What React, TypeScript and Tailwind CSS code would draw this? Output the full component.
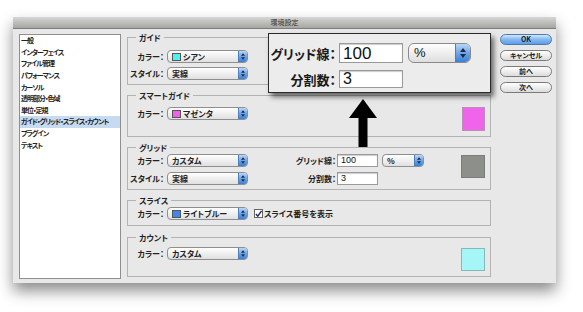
import React from 'react';

const jp = "font-['Noto_Sans_CJK_JP',sans-serif] [font-feature-settings:'palt']";

const listItems = [
    '一般',
    'インターフェイス',
    'ファイル管理',
    'パフォーマンス',
    'カーソル',
    '透明部分・色域',
    '単位・定規',
    'ガイド・グリッド・スライス・カウント',
    'プラグイン',
    'テキスト',
];

const Stepper = ({ big = false }: { big?: boolean }) => (
    <div
        className={`flex flex-col items-center justify-center border-l border-[#4d7fc0] bg-gradient-to-b from-[#b9d7f7] via-[#6ea5e8] to-[#3b7fd6] ${big ? 'w-[15px] rounded-r-[5px] gap-[2px]' : 'w-[9px] rounded-r-[3px] gap-[1px]'}`}
    >
        <svg width={big ? 6 : 4} height={big ? 4 : 3} viewBox="0 0 6 4">
            <polygon points="3,0 6,4 0,4" fill="#1b2a40" />
        </svg>
        <svg width={big ? 6 : 4} height={big ? 4 : 3} viewBox="0 0 6 4">
            <polygon points="0,0 6,0 3,4" fill="#1b2a40" />
        </svg>
    </div>
);

const Popup = ({ w, swatch, label }: { w: string; swatch?: string; label: string }) => (
    <div
        className={`flex h-[13px] items-stretch rounded-[4px] border border-[#8e8e8e] bg-gradient-to-b from-white to-[#e0e0e0] ${w}`}
    >
        <div className="flex flex-1 items-center gap-[2px] pl-[4px] text-[8px] font-bold leading-none text-[#222]">
            {swatch && <span className={`h-[8px] w-[9px] border border-[#555] ${swatch}`} />}
            {label}
        </div>
        <Stepper />
    </div>
);

const Label = ({ children, w = 'w-[36px]' }: { children: React.ReactNode; w?: string }) => (
    <span className={`${w} shrink-0 text-right text-[8px] font-bold leading-none text-[#222]`}>{children}</span>
);

const Group = ({ title, className, children }: { title: string; className: string; children: React.ReactNode }) => (
    <fieldset className={`border border-[#b3b3b3] ${className}`}>
        <legend className="ml-[8px] px-[3px] text-[8px] font-bold leading-[11px] text-[#222]">{title}</legend>
        {children}
    </fieldset>
);

const Btn = ({ children, primary = false }: { children: React.ReactNode; primary?: boolean }) => (
    <div
        className={`flex h-[11px] w-[52px] items-center justify-center rounded-full border text-[7px] font-bold leading-none text-[#222] ${primary ? 'border-[#4f78ad] bg-gradient-to-b from-[#d3e8ff] via-[#84b8f0] to-[#5d9de6]' : 'border-[#7a7a7a] bg-gradient-to-b from-white to-[#dcdcdc]'}`}
    >
        {children}
    </div>
);

const Field = ({ value, w, h, text }: { value: string; w: string; h: string; text: string }) => (
    <div
        className={`flex items-center border border-[#9a9a9a] bg-white pl-[3px] font-['Liberation_Sans',sans-serif] leading-none text-[#111] shadow-[inset_0_1px_1px_rgba(0,0,0,0.2)] ${w} ${h} ${text}`}
    >
        {value}
    </div>
);

export default function App() {
    return (
        <div className={`relative h-[312px] w-[583px] overflow-hidden bg-white pl-[13px] pt-[17px] ${jp}`}>
            <div className="flex h-[266px] w-[543px] flex-col bg-[#e8e8e8] shadow-[0_8px_14px_rgba(0,0,0,0.45)]">
                {/* Title bar */}
                <div className="flex h-[12px] items-center justify-center border-b border-[#7d7d7b] bg-gradient-to-b from-[#d6d6d4] to-[#a6a6a3] text-[7px] leading-none text-[#333]">
                    環境設定
                </div>

                <div className="flex items-start pl-[6px] pt-[3px]">
                    {/* Category list */}
                    <div className="mt-[2px] h-[245px] w-[102px] border border-[#8f8f8f] bg-white">
                        {listItems.map((item, i) => (
                            <div
                                key={item}
                                className={`flex h-[11.6px] items-center whitespace-nowrap pl-[1px] text-[7px] font-bold leading-none tracking-[-1px] text-[#222] ${i === 7 ? 'bg-[#c6daf0]' : ''}`}
                            >
                                {item}
                            </div>
                        ))}
                    </div>

                    {/* Settings groups */}
                    <div className="ml-[6px] flex w-[364px] flex-col">
                        <Group title="ガイド" className="h-[53px]">
                            <div className="flex flex-col gap-[4px] pt-[7px]">
                                <div className="flex items-center gap-[3px]">
                                    <Label>カラー：</Label>
                                    <Popup w="w-[81px]" swatch="bg-[#4ff0f0]" label="シアン" />
                                </div>
                                <div className="flex items-center gap-[3px]">
                                    <Label>スタイル：</Label>
                                    <Popup w="w-[81px]" label="実線" />
                                </div>
                            </div>
                        </Group>

                        <Group title="スマートガイド" className="mt-[5px] h-[47px]">
                            <div className="flex items-start justify-between pr-[5px] pt-[6px]">
                                <div className="flex items-center gap-[3px]">
                                    <Label>カラー：</Label>
                                    <Popup w="w-[81px]" swatch="bg-[#f060ea]" label="マゼンタ" />
                                </div>
                                <div className="h-[24px] w-[23px] border border-[#b98fb5] bg-[#f064ec]" />
                            </div>
                        </Group>

                        <Group title="グリッド" className="mt-[5px] h-[48px]">
                            <div className="flex items-start pr-[5px] pt-[1px]">
                                <div className="flex flex-col gap-[5px]">
                                    <div className="flex items-center gap-[3px]">
                                        <Label>カラー：</Label>
                                        <Popup w="w-[81px]" label="カスタム" />
                                    </div>
                                    <div className="flex items-center gap-[3px]">
                                        <Label>スタイル：</Label>
                                        <Popup w="w-[81px]" label="実線" />
                                    </div>
                                </div>
                                <div className="ml-[43px] flex flex-col gap-[5px]">
                                    <div className="flex items-center gap-[1px]">
                                        <Label w="w-[45px]">グリッド線：</Label>
                                        <Field value="100" w="w-[41px]" h="h-[13px]" text="text-[9px]" />
                                        <div className="ml-[3px]">
                                            <Popup w="w-[42px]" label="%" />
                                        </div>
                                    </div>
                                    <div className="flex items-center gap-[1px]">
                                        <Label w="w-[45px]">分割数：</Label>
                                        <Field value="3" w="w-[41px]" h="h-[13px]" text="text-[9px]" />
                                    </div>
                                </div>
                                <div className="ml-auto mt-[1px] h-[23px] w-[24px] border border-[#7b7d79] bg-[#8d8f8b]" />
                            </div>
                        </Group>

                        <Group title="スライス" className="mt-[5px] h-[31px]">
                            <div className="flex items-center gap-[3px] pt-[1px]">
                                <Label>カラー：</Label>
                                <Popup w="w-[81px]" swatch="bg-[#3f87ea]" label="ライトブルー" />
                                <div className="ml-[3px] flex items-center gap-[1px]">
                                    <span className="flex h-[9px] w-[9px] items-center justify-center border border-[#666] bg-white">
                                        <svg width="8" height="8" viewBox="0 0 8 8">
                                            <path d="M1 4 L3.2 6.5 L7.5 0.5" fill="none" stroke="#1a2a5a" strokeWidth="1.6" />
                                        </svg>
                                    </span>
                                    <span className="text-[8px] font-bold leading-none text-[#222]">スライス番号を表示</span>
                                </div>
                            </div>
                        </Group>

                        <Group title="カウント" className="mt-[6px] h-[45px]">
                            <div className="flex items-start justify-between pr-[5px] pt-[4px]">
                                <div className="flex items-center gap-[3px]">
                                    <Label>カラー：</Label>
                                    <Popup w="w-[81px]" label="カスタム" />
                                </div>
                                <div className="mt-[1px] h-[23px] w-[24px] border border-[#84b9bb] bg-[#a6f5f7]" />
                            </div>
                        </Group>
                    </div>

                    {/* Buttons */}
                    <div className="ml-[9px] mt-[2px] flex flex-col gap-[5px]">
                        <Btn primary>OK</Btn>
                        <Btn>キャンセル</Btn>
                        <Btn>前へ</Btn>
                        <Btn>次へ</Btn>
                    </div>
                </div>
            </div>

            {/* Zoomed callout */}
            <div className="absolute left-[268px] top-[33px] flex h-[60px] w-[223px] flex-col gap-[7px] border border-[#2a2a2a] bg-[#ececec] pt-[9px] shadow-[3px_4px_5px_rgba(0,0,0,0.55)]">
                <div className="flex items-center">
                    <span className="w-[67px] text-right text-[13px] font-bold leading-none text-[#1a1a1a]">グリッド線：</span>
                    <div className="ml-[3px]">
                        <Field value="100" w="w-[64px]" h="h-[20px]" text="text-[17px]" />
                    </div>
                    <div className="ml-[5px] flex h-[20px] w-[63px] items-stretch rounded-[6px] border border-[#8a8a8a] bg-gradient-to-b from-white to-[#dedede]">
                        <span className="flex-1 pl-[5px] pt-[2px] font-['Liberation_Sans',sans-serif] text-[13px] leading-none text-[#111]">%</span>
                        <Stepper big />
                    </div>
                </div>
                <div className="flex items-center">
                    <span className="w-[67px] text-right text-[13px] font-bold leading-none text-[#1a1a1a]">分割数：</span>
                    <div className="ml-[3px]">
                        <Field value="3" w="w-[64px]" h="h-[18px]" text="text-[16px]" />
                    </div>
                </div>
            </div>

            {/* Arrow */}
            <svg className="absolute left-[349px] top-[99px]" width="28" height="48" viewBox="0 0 28 48">
                <polygon points="14,0 28,19 18.5,19 18.5,48 9.5,48 9.5,19 0,19" fill="#000" />
            </svg>
        </div>
    );
}
